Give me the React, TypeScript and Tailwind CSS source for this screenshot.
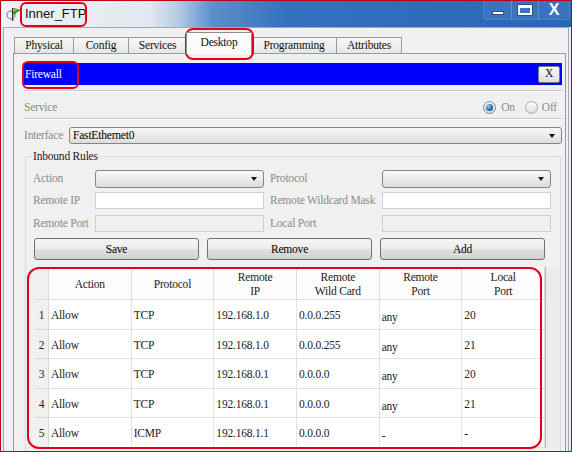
import React from 'react';

type Rule = { n: number; action: string; proto: string; ip: string; wc: string; rport: string; lport: string };

const rules: Rule[] = [
  { n: 1, action: 'Allow', proto: 'TCP', ip: '192.168.1.0', wc: '0.0.0.255', rport: 'any', lport: '20' },
  { n: 2, action: 'Allow', proto: 'TCP', ip: '192.168.1.0', wc: '0.0.0.255', rport: 'any', lport: '21' },
  { n: 3, action: 'Allow', proto: 'TCP', ip: '192.168.0.1', wc: '0.0.0.0', rport: 'any', lport: '20' },
  { n: 4, action: 'Allow', proto: 'TCP', ip: '192.168.0.1', wc: '0.0.0.0', rport: 'any', lport: '21' },
  { n: 5, action: 'Allow', proto: 'ICMP', ip: '192.168.1.1', wc: '0.0.0.0', rport: '-', lport: '-' },
];

const tabs = [
  { label: 'Physical', w: 'w-[59px]' },
  { label: 'Config', w: 'w-[55px]' },
  { label: 'Services', w: 'w-[58px]' },
  { label: 'Desktop', w: 'w-[66px]', active: true },
  { label: 'Programming', w: 'w-[84px]' },
  { label: 'Attributes', w: 'w-[66px]' },
];

const Caret = () => (
  <span className="h-0 w-0 border-l-[3px] border-r-[3px] border-t-[4px] border-l-transparent border-r-transparent border-t-[#111]" />
);

const Select = ({ className = '', value = '' }: { className?: string; value?: string }) => (
  <div
    className={`flex items-center justify-between rounded-[3px] border border-[#858585] bg-[linear-gradient(#f8f8f8,#ececec_45%,#dcdcdc)] pl-[3px] pr-[6px] text-black ${className}`}
  >
    <span>{value}</span>
    <Caret />
  </div>
);

const Button = ({ label }: { label: string }) => (
  <button
    type="button"
    className="h-[22px] w-[165px] rounded-[3px] border border-[#707070] bg-[linear-gradient(#f4f4f4,#ececec_48%,#dedede_52%,#d2d2d2)] pt-[1px] text-black"
  >
    {label}
  </button>
);

// tiny firewall/device icon in the window caption
const AppIcon = () => (
  <svg width="16" height="16" viewBox="0 0 16 16">
    <circle cx="5" cy="9" r="4" fill="none" stroke="#9a9a9a" strokeWidth="1.5" />
    <rect x="6" y="2" width="1.2" height="13" fill="#333" />
    <path d="M7 2 L15 4 L7 9 Z" fill="#2f8f2f" />
    <path d="M7 3.2 L12 4.4 L7 5.6 Z" fill="#e8c23a" />
  </svg>
);

const WindowButtons = () => (
  <div className="flex h-[19px] self-start overflow-hidden rounded-b-[4px] border border-t-0 border-[#5a7eab] bg-[#4a80c4]/50">
    <div className="flex w-[28px] items-center justify-center border-r border-[#6b90c0]">
      <span className="mt-[6px] h-[4px] w-[12px] border border-[#33507a] bg-white" />
    </div>
    <div className="flex w-[27px] items-center justify-center border-r border-[#6b90c0]">
      <span className="h-[10px] w-[14px] border-[2px] border-t-[3px] border-white shadow-[0_0_0_1px_#33507a]" />
    </div>
    <div className="flex w-[30px] items-center justify-center pb-[1px] font-[family-name:Liberation_Sans,sans-serif] text-[16px] font-bold tracking-normal text-white">
      X
    </div>
  </div>
);

const RedMark = ({ className }: { className: string }) => (
  <div className={`pointer-events-none absolute rounded-[6px] border-2 border-[#e3001b] ${className}`} />
);

export default function App() {
  return (
    <div className="relative h-[452px] w-[572px] overflow-hidden border border-[#b80010] bg-[#e9eef4] font-[family-name:Liberation_Serif,serif] text-[11.5px] tracking-[-0.2px]">
      {/* caption */}
      <div className="flex h-[26px] items-center bg-[linear-gradient(90deg,#eef2f6_0%,#e2e8ef_26%,#b7cbe4_31%,#5d8fcc_37%,#3571bf_50%,#2a66b6_100%)]">
        <div className="ml-[5px]">
          <AppIcon />
        </div>
        <span className="ml-[3px] font-[family-name:Liberation_Sans,sans-serif] text-[13px] tracking-normal text-[#111]">Inner_FTP</span>
        <div className="ml-auto mr-[1px] self-start">
          <WindowButtons />
        </div>
      </div>

      {/* window body */}
      <div className="ml-[2px] h-[426px] w-[566px] border border-b-0 border-[#9fa9b4] bg-[#f0f0f0] pt-[5px]">
        {/* tab strip */}
        <div className="ml-[10px] flex h-[20px] items-end">
          {tabs.map((t, i) =>
            t.active ? (
              <div
                key={t.label}
                className={`relative z-10 -mb-px flex h-[22px] items-center justify-center border border-b-0 border-[#8e8e8e] bg-[#fbfbfb] pb-[1px] text-[#111] ${t.w}`}
              >
                {t.label}
              </div>
            ) : (
              <div
                key={t.label}
                className={`flex h-[16px] items-center justify-center border-t border-[#9a9a9a] bg-[linear-gradient(#f7f7f7,#e6e6e6)] pt-[1px] text-[#111] ${t.w} ${
                  i === 0 ? 'border-l' : ''
                } ${i === tabs.length - 1 ? 'border-r' : ''} ${i !== 0 && !tabs[i - 1].active ? 'border-l' : ''}`}
              >
                {t.label}
              </div>
            ),
          )}
        </div>

        {/* tab panel */}
        <div className="ml-[9px] h-[400px] w-[553px] border border-b-0 border-[#9a9a9a] bg-[#f0f0f0]">
          <div className="ml-[9px] w-[539px]">
            {/* Firewall header */}
            <div className="mt-[9px] flex h-[22px] items-center justify-between bg-[#0000ff] pl-[2px]">
              <span className="pt-[1px] text-white">Firewall</span>
              <div className="mr-[2px] flex h-[17px] w-[22px] items-center justify-center rounded-[2px] border border-[#7b7b7b] bg-[linear-gradient(#fafafa,#dddddd)] text-[#111]">
                X
              </div>
            </div>

            <div className="mt-[5px] h-[2px] border-t border-b border-t-[#c8c8c8] border-b-white" />

            {/* Service */}
            <div className="mt-[4px] flex h-[22px] items-center justify-between pl-[1px] pr-[5px] pt-[1px] text-[#8a8a8a]">
              <span>Service</span>
              <div className="flex items-center">
                <span className="flex h-[13px] w-[13px] items-center justify-center rounded-full border border-[#7f8a96] bg-[linear-gradient(#f4f4f4,#d8d8d8)]">
                  <span className="h-[7px] w-[7px] rounded-full bg-[radial-gradient(circle_at_35%_35%,#9fd3ff,#1d6bb5_55%,#0b3f78)]" />
                </span>
                <span className="ml-[5px]">On</span>
                <span className="ml-[10px] h-[13px] w-[13px] rounded-full border border-[#a5a5a5] bg-[linear-gradient(#ffffff,#dcdcdc)]" />
                <span className="ml-[4px]">Off</span>
              </div>
            </div>

            <div className="h-[2px] border-t border-b border-t-[#c8c8c8] border-b-white" />

            {/* Interface */}
            <div className="mt-[7px] flex h-[17px] items-center">
              <span className="w-[46px] pl-[1px] text-[#8a8a8a]">Interface</span>
              <Select className="h-[17px] w-[493px]" value="FastEthernet0" />
            </div>

            {/* Inbound rules */}
            <fieldset className="mt-[5px] ml-[2px] h-[320px] w-[536px] rounded-[3px] border border-[#d3dbe2]">
              <legend className="ml-[6px] px-[1px] leading-[14px] text-[#222]">Inbound Rules</legend>
              <div className="pt-[7px] pl-[7px]">
                <div className="flex h-[17px] items-center">
                  <span className="w-[62px] whitespace-nowrap text-[#8a8a8a]">Action</span>
                  <Select className="h-[18px] w-[169px]" />
                  <span className="ml-[6px] w-[112px] whitespace-nowrap text-[#8a8a8a]">Protocol</span>
                  <Select className="h-[18px] w-[169px]" />
                </div>
                <div className="mt-[5px] flex h-[17px] items-center">
                  <span className="w-[62px] whitespace-nowrap text-[#8a8a8a]">Remote IP</span>
                  <div className="h-[17px] w-[169px] border border-[#c9d1da] bg-white" />
                  <span className="ml-[6px] w-[112px] whitespace-nowrap text-[#8a8a8a]">Remote Wildcard Mask</span>
                  <div className="h-[17px] w-[169px] border border-[#c9d1da] bg-white" />
                </div>
                <div className="mt-[6px] flex h-[17px] items-center">
                  <span className="w-[62px] whitespace-nowrap text-[#8a8a8a]">Remote Port</span>
                  <div className="h-[17px] w-[169px] border border-[#cdcdcd] bg-[#f0f0f0]" />
                  <span className="ml-[6px] w-[112px] whitespace-nowrap text-[#8a8a8a]">Local Port</span>
                  <div className="h-[17px] w-[169px] border border-[#cdcdcd] bg-[#f0f0f0]" />
                </div>
              </div>
              <div className="mt-[6px] flex gap-[8px] pl-[8px]">
                <Button label="Save" />
                <Button label="Remove" />
                <Button label="Add" />
              </div>

              {/* rules table */}
              <div className="mt-[7px] ml-[9px] grid w-[525px] grid-cols-[14px_repeat(6,minmax(0,1fr))_15px] bg-white text-[#222]">
                <div className="h-[33px] border-r border-b border-[#d9d9d9] bg-[#f0f0f0]" />
                {['Action', 'Protocol', 'Remote\nIP', 'Remote\nWild Card', 'Remote\nPort', 'Local\nPort'].map((h) => (
                  <div
                    key={h}
                    className="flex h-[33px] items-center justify-center whitespace-pre-line border-r border-b border-[#dcdcdc] bg-[#fcfcfc] pt-[2px] text-center leading-[14px]"
                  >
                    {h}
                  </div>
                ))}
                <div className="row-span-6 border-l border-[#b5b5b5] bg-[#ececec]" />
                {rules.map((r) => (
                  <React.Fragment key={r.n}>
                    <div className="flex h-[29.5px] items-center justify-center border-r border-b border-[#d9d9d9] bg-[#f0f0f0] pt-[3px]">
                      {r.n}
                    </div>
                    {[r.action, r.proto, r.ip, r.wc, r.rport, r.lport].map((v, i) => (
                      <div
                        key={i}
                        className={`flex h-[29.5px] items-center border-r border-b border-[#e3e3e3] pl-[2px] ${
                          i === 4 ? 'pt-[7px]' : 'pt-[3px]'
                        }`}
                      >
                        {v}
                      </div>
                    ))}
                  </React.Fragment>
                ))}
              </div>
            </fieldset>
          </div>
        </div>
      </div>

      {/* red annotation marks */}
      <RedMark className="left-[19px] top-[1px] h-[25px] w-[67px]" />
      <RedMark className="left-[184px] top-[27px] h-[32px] w-[69px] rounded-[8px]" />
      <RedMark className="left-[21px] top-[60px] h-[28px] w-[57px]" />
      <RedMark className="left-[26px] top-[266px] h-[182px] w-[515px] rounded-[12px]" />
    </div>
  );
}
